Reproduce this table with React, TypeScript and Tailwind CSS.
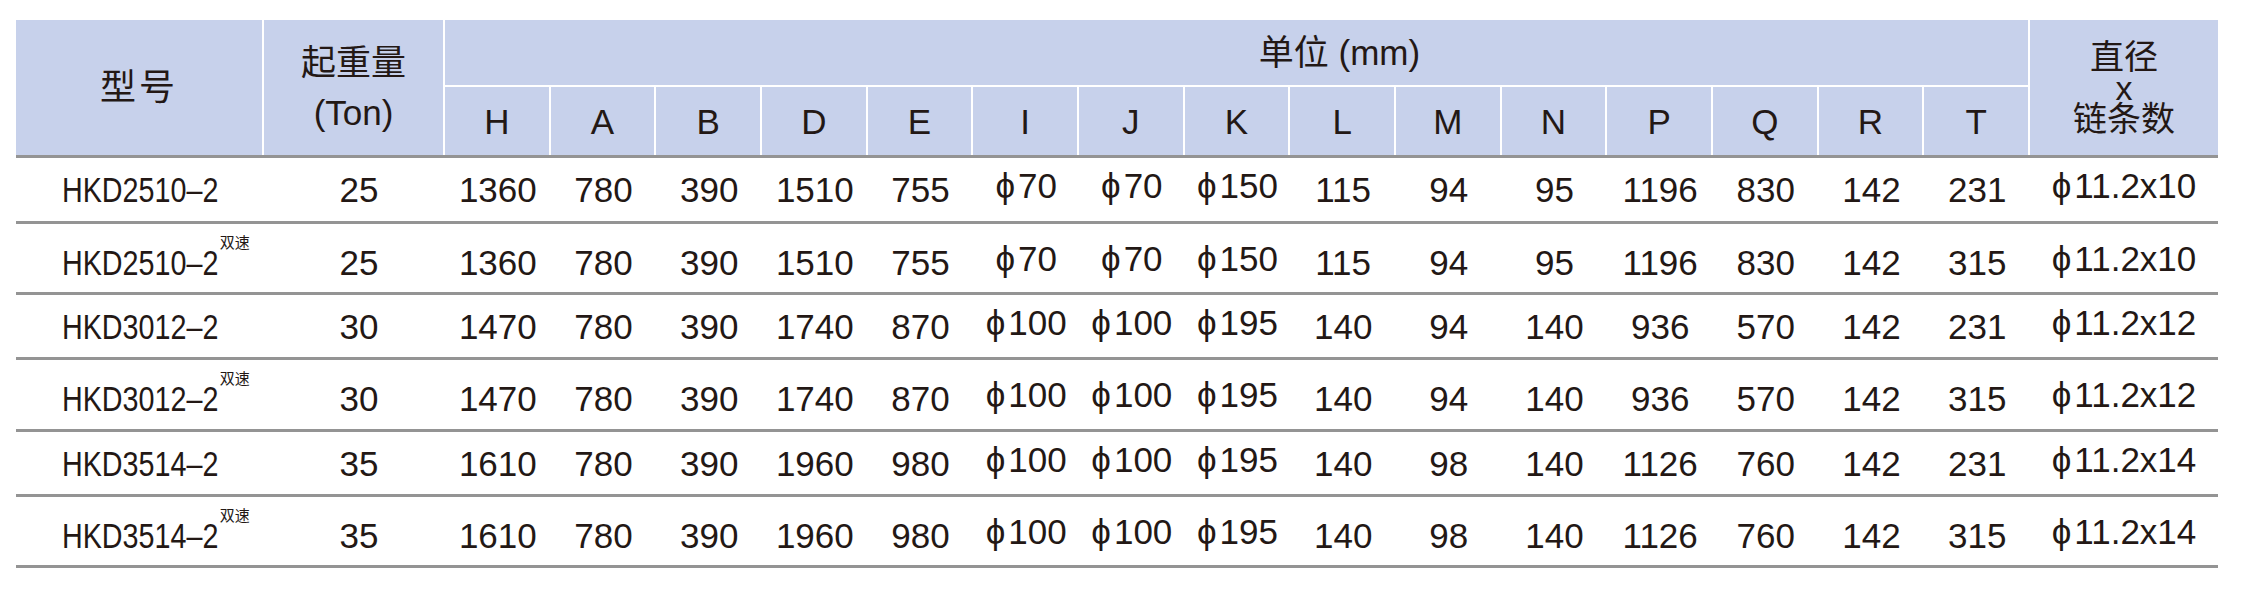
import React from "react";

type Row = {
  model: string;
  sup: boolean;
  ton: string;
  vals: string[];
  last: string;
  h: string;
};

const letters = ["H", "A", "B", "D", "E", "I", "J", "K", "L", "M", "N", "P", "Q", "R", "T"];

const rows: Row[] = [
  {
    model: "HKD2510–2",
    sup: false,
    ton: "25",
    vals: ["1360", "780", "390", "1510", "755", "ϕ70", "ϕ70", "ϕ150", "115", "94", "95", "1196", "830", "142", "231"],
    last: "ϕ11.2x10",
    h: "h-[66px]",
  },
  {
    model: "HKD2510–2",
    sup: true,
    ton: "25",
    vals: ["1360", "780", "390", "1510", "755", "ϕ70", "ϕ70", "ϕ150", "115", "94", "95", "1196", "830", "142", "315"],
    last: "ϕ11.2x10",
    h: "h-[71px]",
  },
  {
    model: "HKD3012–2",
    sup: false,
    ton: "30",
    vals: ["1470", "780", "390", "1740", "870", "ϕ100", "ϕ100", "ϕ195", "140", "94", "140", "936", "570", "142", "231"],
    last: "ϕ11.2x12",
    h: "h-[65px]",
  },
  {
    model: "HKD3012–2",
    sup: true,
    ton: "30",
    vals: ["1470", "780", "390", "1740", "870", "ϕ100", "ϕ100", "ϕ195", "140", "94", "140", "936", "570", "142", "315"],
    last: "ϕ11.2x12",
    h: "h-[72px]",
  },
  {
    model: "HKD3514–2",
    sup: false,
    ton: "35",
    vals: ["1610", "780", "390", "1960", "980", "ϕ100", "ϕ100", "ϕ195", "140", "98", "140", "1126", "760", "142", "231"],
    last: "ϕ11.2x14",
    h: "h-[65px]",
  },
  {
    model: "HKD3514–2",
    sup: true,
    ton: "35",
    vals: ["1610", "780", "390", "1960", "980", "ϕ100", "ϕ100", "ϕ195", "140", "98", "140", "1126", "760", "142", "315"],
    last: "ϕ11.2x14",
    h: "h-[71px]",
  },
];

function Val({ v }: { v: string }) {
  if (v.startsWith("ϕ")) {
    return (
      <span className="inline-flex items-baseline -translate-y-[4px] whitespace-nowrap">
        <span className="mr-[3px]">ϕ</span>
        <span>{v.slice(1)}</span>
      </span>
    );
  }
  return <span>{v}</span>;
}

export default function App() {
  return (
    <div className="w-[2251px] h-[596px] bg-white text-[#231815] font-['Liberation_Sans','Noto_Sans_CJK_SC',sans-serif]">
      <div className="pt-[20px] pl-[16px]">
        <div className="w-[2202px]">
          {/* Header */}
          <div className="flex h-[138px] border-b-[3px] border-[#949494] bg-[#c7d1eb]">
            <div className="w-[248px] shrink-0 flex items-center justify-center border-r-2 border-white text-[36px] tracking-[3px] leading-none">
              型号
            </div>
            <div className="w-[181px] shrink-0 flex flex-col items-center justify-center border-r-2 border-white text-[35px] leading-[50px]">
              <span>起重量</span>
              <span>(Ton)</span>
            </div>
            <div className="w-[1585px] shrink-0 flex flex-col">
              <div className="h-[67px] flex items-center justify-center pl-[206px] border-r-2 border-b-2 border-white text-[35px] leading-none whitespace-nowrap">
                单位 (mm)
              </div>
              <div className="flex-1 grid grid-cols-15">
                {letters.map((l) => (
                  <div
                    key={l}
                    className="flex items-center justify-center border-r-2 border-white text-[35px] leading-none"
                  >
                    {l}
                  </div>
                ))}
              </div>
            </div>
            <div className="w-[188px] shrink-0 flex flex-col items-center justify-center text-[34px]">
              <span className="leading-[34px]">直径</span>
              <span className="leading-[28px]">x</span>
              <span className="leading-[34px]">链条数</span>
            </div>
          </div>

          {/* Body */}
          {rows.map((r, i) => (
            <div
              key={i}
              className={`flex ${r.h} ${r.sup ? "pt-[8px]" : ""} border-b-[3px] border-[#949494] text-[35px] leading-[35px]`}
            >
              <div className="w-[248px] shrink-0 flex items-center pl-[46px] whitespace-nowrap">
                <span className="inline-block scale-x-[0.82] origin-left mr-[-34px]">{r.model}</span>
                {r.sup && (
                  <span className="relative -top-[20px] shrink-0 whitespace-nowrap text-[15px] leading-none ml-[1px]">
                    双速
                  </span>
                )}
              </div>
              <div className="w-[181px] shrink-0 flex items-center justify-center pl-[9px]">{r.ton}</div>
              <div className="w-[1585px] shrink-0 grid grid-cols-15">
                {r.vals.map((v, j) => (
                  <div key={j} className="flex items-center justify-center whitespace-nowrap">
                    <Val v={v} />
                  </div>
                ))}
              </div>
              <div className="w-[188px] shrink-0 flex items-center justify-center whitespace-nowrap">
                <Val v={r.last} />
              </div>
            </div>
          ))}
        </div>
      </div>
    </div>
  );
}
